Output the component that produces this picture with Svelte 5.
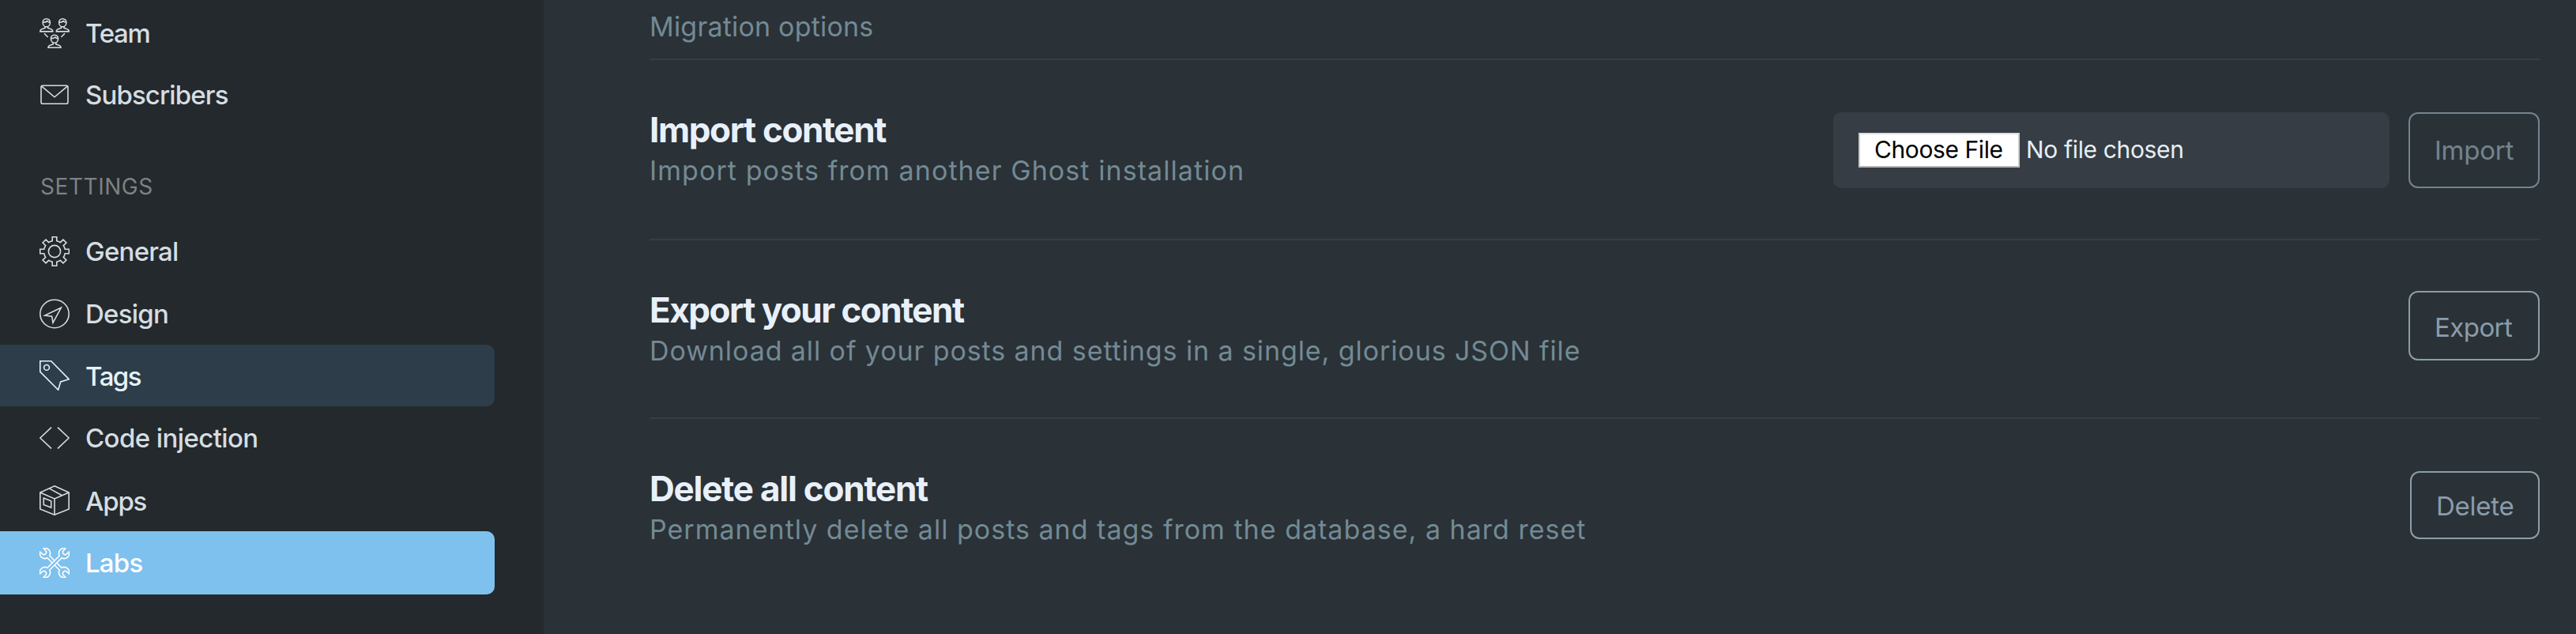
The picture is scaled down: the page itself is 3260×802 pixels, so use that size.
<script>
  const topItems = [
    { label: 'Team', icon: 'team', height: 79, spacing: -1.3 },
    { label: 'Subscribers', icon: 'mail', height: 78, spacing: -0.88 }
  ];
  const settings = [
    { label: 'General', icon: 'gear', height: 79, spacing: -0.76 },
    { label: 'Design', icon: 'compass', height: 79, spacing: -0.75 },
    { label: 'Tags', icon: 'tag', height: 78, spacing: -1.5, state: 'hover' },
    { label: 'Code injection', icon: 'code', height: 79, spacing: -0.6 },
    { label: 'Apps', icon: 'box', height: 79, spacing: -1.2, state: 'low' },
    { label: 'Labs', icon: 'tools', height: 80, spacing: -0.8, state: 'active' }
  ];

  const pt = (x, y, a) => {
    const c = Math.cos(a), s = Math.sin(a);
    return `${(19 + x * c - y * s).toFixed(2)},${(19 + x * s + y * c).toFixed(2)}`;
  };
  let gear = '';
  for (let k = 0; k < 8; k++) {
    const a = (k * Math.PI) / 4;
    gear += `${k ? 'A13.5,13.5 0 0 1 ' : 'M'}${pt(-2.8, -13.2, a)}L${pt(-2.8, -18.3, a)}L${pt(2.8, -18.3, a)}L${pt(2.8, -13.2, a)}`;
  }
  gear += `A13.5,13.5 0 0 1 ${pt(-2.8, -13.2, 0)}Z`;

  const wrench =
    'M2,-10.8A6.5,6.5 0 0 0 3.2,-22.7L2.8,-18C2.4,-15.4 -2.4,-15.4 -2.8,-18L-3.2,-22.7A6.5,6.5 0 0 0 -2,-10.8' +
    'V10.8A6.5,6.5 0 0 0 -3.2,22.7L-2.8,18C-2.4,15.4 2.4,15.4 2.8,18L3.2,22.7A6.5,6.5 0 0 0 2,10.8Z';
</script>

{#snippet person(x, y)}
  <g transform="translate({x} {y})">
    <path d="M8.8 .8C6 .8 4.2 2.7 4.2 5.4C4.2 8.6 6.2 10.9 8.8 10.9S13.4 8.6 13.4 5.4C13.4 2.7 11.6 .8 8.8 .8Z" />
    <path d="M4.4 5.2C6.5 5.3 8.6 4.7 9.7 3.6C10.5 4.7 11.8 5.2 13.2 5.2" />
    <path d="M7 10.5V12.6C4 13.6 .8 13.8 .8 16.9H16.8C16.8 13.8 13.6 13.6 10.6 12.6V10.5" />
  </g>
{/snippet}

{#snippet icon(name)}
  <svg class="icon" viewBox="0 0 38 38" aria-hidden="true">
    {#if name === 'team'}
      {@render person(0, 0)}
      {@render person(20.5, 0)}
      {@render person(10.2, 20.4)}
      <path d="M6 19.3L10.6 24M32 19.3L27.4 24" />
    {:else if name === 'mail'}
      <rect x="2" y="7.2" width="34" height="23" rx="2" />
      <path d="M3 8.4L19 21.8L35 8.4" />
    {:else if name === 'gear'}
      <path d={gear} />
      <circle cx="19" cy="19" r="7.6" />
    {:else if name === 'compass'}
      <ellipse cx="19" cy="19" rx="18.2" ry="17.7" />
      <path d="M27.3 11.3L6.7 21L15.7 22.3L17 30.3Z" />
    {:else if name === 'tag'}
      <path d="M.8 .8H14.7L37.2 23.7L26.7 27L23.7 37.2L.8 14.3Z" />
      <circle cx="9" cy="8.9" r="3.4" />
    {:else if name === 'code'}
      <path d="M15 5.7L.8 19L15 32.3M23 5.7L37.2 19L23 32.3" />
    {:else if name === 'box'}
      <path d="M19 .8L37.2 9V30L19 37.2L.8 30V9ZM.8 9L19 17L37.2 9M19 17V37.2M12.3 3.9L28.6 12.7" />
      <path d="M5.3 16L14.7 19.8V28L5.3 24.5Z" />
    {:else}
      <path class="solid" transform="translate(19 19) rotate(-45)" d={wrench} />
      <path class="solid" transform="translate(19 19) rotate(45)" d={wrench} />
    {/if}
  </svg>
{/snippet}

{#snippet row(item)}
  <li class="item {item.state ?? ''}" style="height: {item.height}px">
    {@render icon(item.icon)}
    <span style="letter-spacing: {item.spacing}px">{item.label}</span>
  </li>
{/snippet}

<div class="app">
  <nav class="sidebar">
    <ul>{#each topItems as item}{@render row(item)}{/each}</ul>
    <h4>SETTINGS</h4>
    <ul>{#each settings as item}{@render row(item)}{/each}</ul>
  </nav>

  <main>
    <h2>Migration options</h2>

    <section class="import">
      <div class="copy">
        <h3>Import content</h3>
        <p>Import posts from another Ghost installation</p>
      </div>
      <div class="file">
        <span class="choose">Choose File</span>
        <span class="chosen">No file chosen</span>
      </div>
      <button class="dim">Import</button>
    </section>

    <section class="export">
      <div class="copy">
        <h3>Export your content</h3>
        <p>Download all of your posts and settings in a single, glorious JSON file</p>
      </div>
      <button>Export</button>
    </section>

    <section class="delete">
      <div class="copy">
        <h3>Delete all content</h3>
        <p>Permanently delete all posts and tags from the database, a hard reset</p>
      </div>
      <button>Delete</button>
    </section>
  </main>
</div>

<style>
  :global(body) {
    margin: 0;
    background: #2a3137;
  }
  .app {
    display: flex;
    height: 802px;
    overflow: hidden;
    font-family: "Inter", "Liberation Sans", sans-serif;
  }
  h2, h3, h4, p, ul {
    margin: 0;
    padding: 0;
    font-weight: 400;
    white-space: nowrap;
  }
  .sidebar {
    box-sizing: border-box;
    flex: 0 0 688px;
    padding: 2px 62px 0 0;
    background: #23292c;
  }
  ul {
    list-style: none;
  }
  .item {
    box-sizing: border-box;
    display: flex;
    align-items: center;
    gap: 20px;
    padding-left: 50px;
    border-radius: 0 10px 10px 0;
    color: #d5dde2;
    font-size: 33px;
    line-height: 40px;
    font-weight: 500;
  }
  .hover span,
  .low span {
    padding-top: 2px;
  }
  .icon {
    width: 38px;
    height: 38px;
    fill: none;
    stroke: currentColor;
    stroke-width: 1.6;
  }
  .hover {
    background: #2d3e4a;
    color: #e8f2fa;
  }
  .active {
    background: #7fc1ee;
    color: #fff;
  }
  .solid {
    fill: #7fc1ee;
  }
  h4 {
    padding: 57px 0 22px 51px;
    color: #7e8184;
    font-size: 28px;
    line-height: 40px;
    letter-spacing: 0.55px;
  }
  main {
    flex: 1;
    padding: 0 46px 0 134px;
  }
  h2 {
    box-sizing: border-box;
    height: 76px;
    padding-top: 9px;
    border-bottom: 2px solid #363d44;
    color: #738a94;
    font-size: 34px;
    line-height: 50px;
    letter-spacing: 0.2px;
  }
  section {
    box-sizing: border-box;
    display: flex;
    align-items: flex-start;
    height: 228px;
    border-bottom: 2px solid #363d44;
  }
  .export {
    height: 226px;
  }
  .delete {
    border: 0;
  }
  .copy {
    flex: 1;
    padding-top: 62px;
  }
  h3 {
    color: #e8f0f9;
    font-size: 44px;
    line-height: 52px;
    font-weight: 700;
    letter-spacing: -1.38px;
  }
  .export h3 {
    letter-spacing: -1.52px;
  }
  .delete h3 {
    letter-spacing: -1.22px;
  }
  p {
    color: #738a94;
    font-size: 34px;
    line-height: 51px;
    font-weight: 400;
    letter-spacing: 1.08px;
  }
  .export p {
    letter-spacing: 0.91px;
  }
  .delete p {
    letter-spacing: 1.01px;
  }
  .file {
    box-sizing: border-box;
    display: flex;
    align-items: center;
    gap: 8px;
    width: 704px;
    height: 96px;
    margin: 66px 24px 0 0;
    padding: 0 32px;
    border-radius: 10px;
    background: #363d44;
    font-size: 30px;
    line-height: 38px;
    white-space: nowrap;
  }
  .choose {
    box-sizing: border-box;
    width: 204px;
    height: 44px;
    padding-left: 18px;
    border: 2px solid;
    border-color: #dedede #cbcbcb #b4b4b4;
    background: #fff;
    color: #000;
    letter-spacing: -0.41px;
  }
  .chosen {
    padding-bottom: 2px;
    color: #e5eff5;
    letter-spacing: -0.35px;
  }
  button {
    box-sizing: border-box;
    width: 166px;
    height: 96px;
    margin: 66px 0 0;
    padding: 0 0 0 31px;
    border: 2px solid #8b9ea9;
    border-radius: 12px;
    background: #2a3237;
    color: #8b9cab;
    font: 400 33px/40px "Inter", "Liberation Sans", sans-serif;
    letter-spacing: -0.24px;
    text-align: left;
  }
  .dim {
    border-color: #738490;
    color: #738490;
  }
  .export button {
    height: 88px;
    margin-top: 64px;
    padding-top: 4px;
    letter-spacing: -0.56px;
  }
  .delete button {
    width: 164px;
    height: 86px;
    padding-top: 2px;
  }
</style>
